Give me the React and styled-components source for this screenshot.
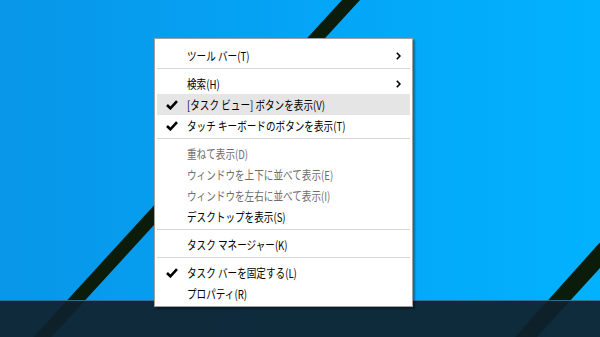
import React from "react";
import styled, { createGlobalStyle } from "styled-components";

const Global = createGlobalStyle`
  html, body { margin: 0; padding: 0; }
  body { width: 600px; height: 337px; overflow: hidden; background: #0a9ae8; }
  #root { width: 600px; height: 337px; }
`;

const Screen = styled.div`
  width: 600px;
  height: 337px;
  display: grid;
  grid-template-areas: "stack";
  overflow: hidden;
`;

const Wallpaper = styled.svg`
  grid-area: stack;
  display: block;
  width: 600px;
  height: 337px;
`;

const Layout = styled.div`
  grid-area: stack;
  display: flex;
  flex-direction: column;
  height: 337px;
`;

const DesktopArea = styled.div`
  flex: 1;
  position: relative;
`;

const Taskbar = styled.div`
  height: 37px;
  flex: none;
  background: rgba(15, 33, 45, 0.93);
  border-top: 1px solid rgba(90, 200, 255, 0.45);
  box-sizing: border-box;
`;

const Menu = styled.div`
  position: absolute;
  left: 154px;
  top: 38px;
  width: 259px;
  box-sizing: border-box;
  background: #ffffff;
  border: 1px solid #a0a0a0;
  box-shadow: 2px 2px 2px rgba(0, 0, 0, 0.35);
  padding: 6px 2px 2px 1px;
  font-family: "Noto Sans CJK JP", "Noto Sans", sans-serif;
  font-size: 12px;
  display: flex;
  flex-direction: column;
`;

const Row = styled.div`
  height: 21px;
  display: grid;
  grid-template-columns: 30px 1fr auto;
  align-items: center;
  padding-right: 9px;
  margin-left: 1px;
  background: ${(p) => (p.$hover ? "#e5e5e5" : "transparent")};
  color: ${(p) => (p.$disabled ? "#6d6d6d" : "#000000")};
  line-height: 21px;
  white-space: nowrap;
`;

const CheckCell = styled.div`
  display: flex;
  align-items: center;
  padding-left: 9px;
  height: 21px;
`;

const Label = styled.span`
  display: block;
  transform: scaleX(0.8);
  transform-origin: left center;
`;

const ArrowCell = styled.div`
  display: flex;
  align-items: center;
  height: 21px;
`;

const Separator = styled.div`
  height: 1px;
  background: #d7d7d7;
  margin: 2px 0 4px 1px;
`;

const Check = () => (
  <svg width="12" height="10" viewBox="0 0 12 10">
    <path d="M1 5 L4.4 8.3 L11 1.2" fill="none" stroke="#000" strokeWidth="2.6" strokeLinecap="butt" strokeLinejoin="miter" />
  </svg>
);

const Chevron = () => (
  <svg width="5" height="8" viewBox="0 0 5 8">
    <path d="M0.8 0.8 L3.9 4 L0.8 7.2" fill="none" stroke="#000" strokeWidth="1.6" />
  </svg>
);

const items = [
  { label: "ツール バー(T)", arrow: true },
  { sep: true },
  { label: "検索(H)", arrow: true },
  { label: "[タスク ビュー] ボタンを表示(V)", check: true, hover: true },
  { label: "タッチ キーボードのボタンを表示(T)", check: true },
  { sep: true },
  { label: "重ねて表示(D)", disabled: true },
  { label: "ウィンドウを上下に並べて表示(E)", disabled: true },
  { label: "ウィンドウを左右に並べて表示(I)", disabled: true },
  { label: "デスクトップを表示(S)" },
  { sep: true },
  { label: "タスク マネージャー(K)" },
  { sep: true },
  { label: "タスク バーを固定する(L)", check: true },
  { label: "プロパティ(R)" },
];

export default function App() {
  return (
    <>
      <Global />
      <Screen>
        <Wallpaper viewBox="0 0 600 337" xmlns="http://www.w3.org/2000/svg">
          <defs>
            <linearGradient id="bg" x1="0" y1="0" x2="1" y2="0">
              <stop offset="0" stopColor="#0896e8" />
              <stop offset="0.5" stopColor="#05a4f6" />
              <stop offset="1" stopColor="#02b2ff" />
            </linearGradient>
          </defs>
          <rect x="0" y="0" width="600" height="337" fill="url(#bg)" />
          <polygon points="342,0 360,0 51.5,337 33.5,337" fill="#0b1c0b" />
          <polygon points="638,200 662,200 537,337 515,337" fill="#0b1c0b" />
        </Wallpaper>
        <Layout>
          <DesktopArea>
            <Menu>
              {items.map((it, i) =>
                it.sep ? (
                  <Separator key={i} />
                ) : (
                  <Row key={i} $hover={it.hover} $disabled={it.disabled}>
                    <CheckCell>{it.check ? <Check /> : null}</CheckCell>
                    <Label>{it.label}</Label>
                    <ArrowCell>{it.arrow ? <Chevron /> : null}</ArrowCell>
                  </Row>
                )
              )}
            </Menu>
          </DesktopArea>
          <Taskbar />
        </Layout>
      </Screen>
    </>
  );
}
